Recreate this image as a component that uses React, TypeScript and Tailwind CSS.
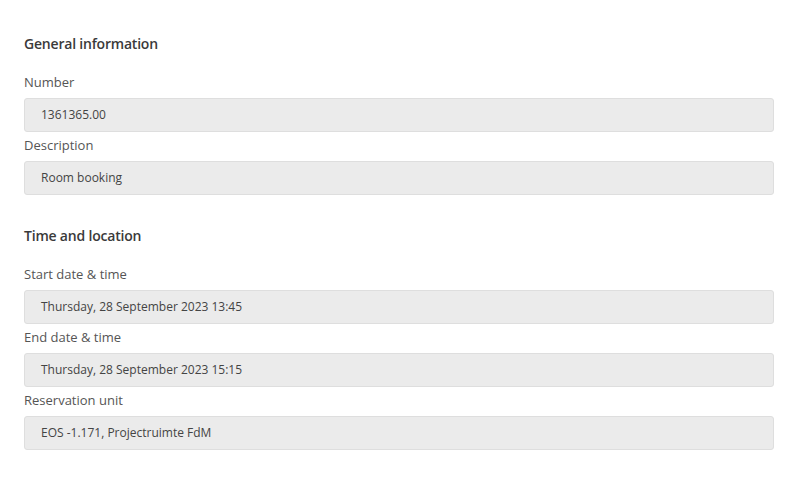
const sections = [
  {
    title: "General information",
    fields: [
      { label: "Number", value: "1361365.00" },
      { label: "Description", value: "Room booking" },
    ],
  },
  {
    title: "Time and location",
    fields: [
      { label: "Start date & time", value: "Thursday, 28 September 2023 13:45" },
      { label: "End date & time", value: "Thursday, 28 September 2023 15:15" },
      { label: "Reservation unit", value: "EOS -1.171, Projectruimte FdM" },
    ],
  },
];

function Field({ label, value }: { label: string; value: string }) {
  return (
    <div className="flex flex-col">
      <label className="text-[13px] leading-[20px] text-[#555] mb-[6px]">{label}</label>
      <div className="h-[34px] flex items-center px-4 bg-[#ebebeb] border border-[#dedede] rounded-[3px] text-[12px] text-[#444]">
        {value}
      </div>
    </div>
  );
}

export default function App() {
  return (
    <div
      className="min-h-screen bg-white px-6 pt-[33px]"
      style={{ fontFamily: '"Open Sans", "Noto Sans", sans-serif' }}
    >
      <div className="flex flex-col gap-[30px]">
        {sections.map((s) => (
          <section key={s.title}>
            <h2 className="text-[14px] leading-[22px] font-semibold tracking-[-0.2px] text-[#3a3a3a] mb-[17px]">
              {s.title}
            </h2>
            <div className="flex flex-col gap-[3px]">
              {s.fields.map((f) => (
                <Field key={f.label} {...f} />
              ))}
            </div>
          </section>
        ))}
      </div>
    </div>
  );
}
